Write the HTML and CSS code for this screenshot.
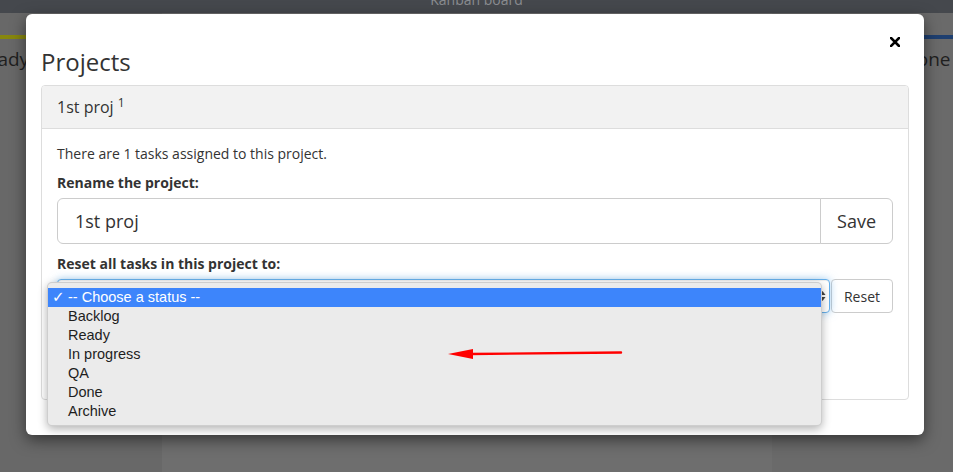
FILE: index.html
```html
<!DOCTYPE html>
<html lang="en">
<head>
    <meta charset="UTF-8">
    <meta name="viewport" content="width=device-width, initial-scale=1.0">
    <title>Kanban board - Projects</title>
    <link rel="stylesheet" href="styles.css">
</head>
<body>
    <!-- Board behind the modal (dimmed by the backdrop) -->
    <div class="board">
        <header class="topbar"><span class="topbar-title">Kanban board</span></header>
        <div class="columns">
            <section class="col col-ready">
                <div class="col-bar"></div>
                <h2 class="col-title">Ready <sup>0</sup></h2>
            </section>
            <section class="col col-middle"></section>
            <section class="col col-done">
                <div class="col-bar"></div>
                <h2 class="col-title">Done<sup>0</sup></h2>
            </section>
        </div>
    </div>

    <!-- Projects modal -->
    <div class="modal">
        <div class="modal-header">
            <h1 class="modal-title">Projects</h1>
            <button class="close" type="button">
                <svg width="10" height="10" viewBox="0 0 10 10">
                    <path d="M1 1 L9 9 M9 1 L1 9" stroke="#000" stroke-width="2.6" stroke-linecap="square"/>
                </svg>
            </button>
        </div>

        <div class="panel">
            <div class="panel-heading">1st proj <sup>1</sup></div>
            <div class="panel-body">
                <p>There are 1 tasks assigned to this project.</p>

                <div class="form-group">
                    <label>Rename the project:</label>
                    <div class="input-group input-group-lg">
                        <input type="text" value="1st proj">
                        <button type="button">Save</button>
                    </div>
                </div>

                <div class="form-group">
                    <label>Reset all tasks in this project to:</label>
                    <div class="input-group">
                        <div class="select-wrap">
                            <div class="select focused">
                                <span>-- Choose a status --</span>
                                <svg class="select-arrows" width="7" height="12" viewBox="0 0 7 12">
                                    <path d="M3.5 1 L6.5 5 L0.5 5 Z M3.5 11 L6.5 7 L0.5 7 Z" fill="#444"/>
                                </svg>
                            </div>
                            <!-- Open native dropdown -->
                            <ul class="dropdown">
                                <li class="selected"><span class="check">✓</span>-- Choose a status --</li>
                                <li><span class="check"></span>Backlog</li>
                                <li><span class="check"></span>Ready</li>
                                <li><span class="check"></span>In progress</li>
                                <li><span class="check"></span>QA</li>
                                <li><span class="check"></span>Done</li>
                                <li><span class="check"></span>Archive</li>
                            </ul>
                        </div>
                        <button type="button" class="btn-reset">Reset</button>
                    </div>
                </div>

                <div class="form-group last">
                    <label>Delete the project:</label>
                    <button type="button" class="btn-delete">Delete</button>
                </div>
            </div>
        </div>
    </div>

    <!-- Annotation arrow -->
    <svg class="annotation" width="190" height="26" viewBox="0 0 190 26">
        <line x1="30" y1="14" x2="181" y2="12.5" stroke="#ff0000" stroke-width="2.4" stroke-linecap="round"/>
        <polygon points="8,14 33,9 33,19" fill="#ff0000"/>
    </svg>
</body>
</html>
```

FILE: styles.css
```css
body {
    margin: 0;
    width: 953px;
    height: 472px;
    overflow: hidden;
    font-family: "Open Sans", Arial, sans-serif;
    font-size: 14px;
    color: #333;
    background-color: #6b6b6b;
}
sup {
    position: relative;
    top: -0.5em;
    vertical-align: baseline;
    line-height: 0;
    font-size: 75%;
}

/* Board (already dimmed by the backdrop) */
.board {
    height: 472px;
    display: flex;
    flex-direction: column;
}
.topbar {
    height: 13px;
    overflow: hidden;
    background-color: #45484d;
    text-align: center;
}
.topbar-title {
    display: block;
    margin-top: -10px;
    line-height: 20px;
    font-size: 14px;
    color: #8b8d91;
}
.columns {
    flex: 1;
    display: flex;
}
.col {
    padding-top: 22px;
    overflow: hidden;
}
.col-ready {
    width: 162px;
    background-color: #686868;
}
.col-middle {
    width: 610px;
    background-color: #6e6e6e;
}
.col-done {
    flex: 1;
    background-color: #6a6a6a;
}
.col-bar {
    height: 4px;
}
.col-ready .col-bar {
    background-color: #87870e;
}
.col-done .col-bar {
    background-color: #1e3f70;
}
.col-title {
    margin: 7px 0 0;
    font-size: 19px;
    font-weight: 400;
    line-height: 26px;
    color: #1f1f1f;
    white-space: nowrap;
}
.col-title sup {
    top: -0.8em;
    margin-left: 6px;
    font-size: 11px;
    color: #b5b5b5;
}
.col-ready .col-title {
    margin-left: -25px;
}
.col-done .col-title {
    margin-left: 131px;
}

/* Modal */
.modal {
    position: absolute;
    top: 14px;
    left: 26px;
    width: 898px;
    box-sizing: border-box;
    padding: 0 15px 35px 15px;
    background-color: #fff;
    border-radius: 6px;
    box-shadow: 0 5px 15px rgba(0, 0, 0, 0.5);
}
.modal-header {
    display: flex;
    justify-content: space-between;
    align-items: flex-start;
    padding-top: 20px;
}
.modal-title {
    margin: 15px 0 10px;
    font-size: 24px;
    font-weight: 400;
    line-height: 26px;
    color: #333;
}
.close {
    margin: 3px 9px 0 0;
    padding: 0;
    border: none;
    background: none;
    line-height: 0;
    cursor: pointer;
}

/* Panel */
.panel {
    border: 1px solid #ddd;
    border-radius: 4px;
}
.panel-heading {
    padding: 10px 15px;
    font-size: 16px;
    line-height: 22px;
    background-color: #f2f2f2;
    border-bottom: 1px solid #ddd;
    border-radius: 3px 3px 0 0;
}
.panel-heading sup {
    font-size: 12px;
}
.panel-body {
    padding: 15px 15px 17px;
}
.panel-body p {
    margin: 0 0 9px;
    line-height: 20px;
}
.form-group {
    margin-bottom: 10px;
}
.form-group.last {
    margin-bottom: 0;
}
.form-group label {
    display: block;
    margin-bottom: 5px;
    font-weight: 700;
    line-height: 20px;
}

.input-group {
    display: flex;
}
.input-group input {
    flex: 1;
    min-width: 0;
    height: 46px;
    box-sizing: border-box;
    padding: 10px 17px;
    font-family: inherit;
    font-size: 18px;
    color: #333;
    border: 1px solid #ccc;
    border-radius: 6px 0 0 6px;
    outline: none;
}
.input-group button {
    font-family: inherit;
    color: #333;
    background-color: #fff;
    border: 1px solid #ccc;
    cursor: pointer;
}
.input-group-lg button {
    margin-left: -1px;
    padding: 0 16px;
    font-size: 18px;
    border-radius: 0 6px 6px 0;
}

/* Status select */
.select-wrap {
    position: relative;
    flex: 1;
}
.select {
    height: 34px;
    box-sizing: border-box;
    padding: 0 3px 0 12px;
    display: flex;
    align-items: center;
    justify-content: space-between;
    border: 1px solid #ccc;
    border-radius: 4px;
    background-color: #fff;
}
.select.focused {
    border-color: #66afe9;
    box-shadow: inset 0 1px 1px rgba(0, 0, 0, 0.075), 0 0 8px rgba(102, 175, 233, 0.6);
}
.btn-reset {
    margin-left: 1px;
    height: 34px;
    padding: 0 12px;
    font-size: 14px;
    border-radius: 4px;
}
.btn-delete {
    height: 34px;
    padding: 0 12px;
    font-family: inherit;
    font-size: 14px;
    color: #fff;
    background-color: #d9534f;
    border: 1px solid #d43f3a;
    border-radius: 4px;
}

/* Native-looking open dropdown */
.dropdown {
    position: absolute;
    top: 3px;
    left: -10px;
    width: 775px;
    margin: 0;
    padding: 5px 0 4px;
    list-style: none;
    box-sizing: border-box;
    background-color: #ebebeb;
    border: 1px solid rgba(0, 0, 0, 0.12);
    border-radius: 5px;
    box-shadow: 0 3px 10px rgba(0, 0, 0, 0.3);
    font-family: "Liberation Sans", Arial, sans-serif;
    font-size: 14.5px;
    color: #1e1e1e;
    z-index: 10;
}
.dropdown li {
    height: 19px;
    line-height: 19px;
    padding-left: 4px;
    white-space: nowrap;
}
.dropdown li.selected {
    background-color: #3d85fb;
    color: #fff;
}
.check {
    display: inline-block;
    width: 16px;
    font-family: "DejaVu Sans", sans-serif;
    font-size: 15px;
}

/* Red annotation arrow */
.annotation {
    position: absolute;
    left: 440px;
    top: 340px;
    z-index: 20;
}
```
